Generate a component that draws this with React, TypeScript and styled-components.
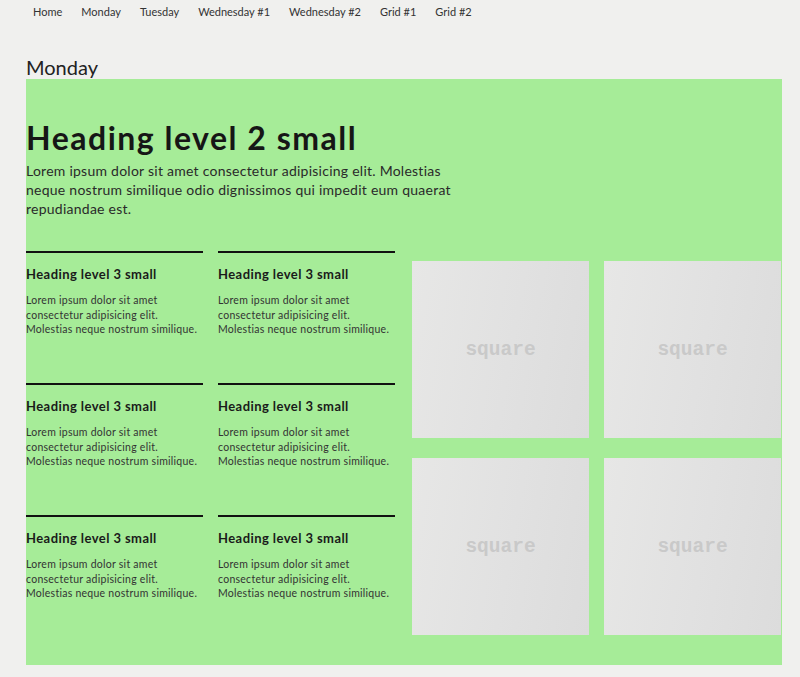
import React from "react";
import styled, { createGlobalStyle } from "styled-components";

const Global = createGlobalStyle`
  html, body { margin: 0; padding: 0; background: #f0f0ee; }
  body { font-family: "Lato", "Noto Sans", sans-serif; color: #222; }
  * { box-sizing: border-box; }
`;

const Page = styled.div`
  padding: 0 18px 0 26px;
`;

const Nav = styled.nav`
  display: flex;
  gap: 19px;
  padding: 5px 0 0 7px;
  height: 55px;
`;

const NavLink = styled.a`
  font-size: 11px;
  color: #333;
  text-decoration: none;
  line-height: 14px;
`;

const PageTitle = styled.h1`
  margin: 0;
  font-size: 20px;
  font-weight: 400;
  line-height: 24px;
  color: #222;
`;

const Section = styled.section`
  background: #a6ec98;
  width: 756px;
  padding: 40px 0 30px;
`;

const H2 = styled.h2`
  margin: 0;
  font-size: 32px;
  font-weight: 700;
  line-height: 38px;
  letter-spacing: 1.5px;
  color: #161616;
`;

const Lead = styled.p`
  margin: 4px 0 0;
  font-size: 14px;
  line-height: 19px;
  letter-spacing: 0.25px;
  color: #2a2a2a;
  max-width: 445px;
`;

const Body = styled.div`
  display: flex;
  align-items: flex-start;
  gap: 17px;
  margin-top: 33px;
`;

const Cards = styled.div`
  display: grid;
  grid-template-columns: 177px 177px;
  column-gap: 15px;
  row-gap: 32px;
`;

const Card = styled.article`
  border-top: 2px solid #111;
  height: 100px;
  padding-top: 13px;
`;

const H3 = styled.h3`
  margin: 0;
  font-size: 13px;
  font-weight: 700;
  line-height: 17px;
  letter-spacing: 0.43px;
  color: #1a1a1a;
`;

const CardText = styled.p`
  margin: 10px 0 0;
  font-size: 10.5px;
  line-height: 14.5px;
  letter-spacing: 0.26px;
  color: #333;
`;

const Squares = styled.div`
  display: grid;
  grid-template-columns: 177px 177px;
  column-gap: 15px;
  row-gap: 20px;
  margin-top: 10px;
`;

const Square = styled.div`
  width: 177px;
  height: 177px;
  background: linear-gradient(100deg, #e7e7e6 0%, #e1e1e1 55%, #dcdcdc 100%);
  display: flex;
  align-items: center;
  justify-content: center;
  font-family: "Courier New", "Liberation Mono", monospace;
  font-weight: 700;
  font-size: 19.5px;
  color: #c9c9c9;
`;

const navItems = ["Home", "Monday", "Tuesday", "Wednesday #1", "Wednesday #2", "Grid #1", "Grid #2"];

export default function App() {
  return (
    <>
      <Global />
      <Page>
        <Nav>
          {navItems.map((n) => (
            <NavLink key={n} href="#">{n}</NavLink>
          ))}
        </Nav>
        <PageTitle>Monday</PageTitle>
        <Section>
          <H2>Heading level 2 small</H2>
          <Lead>
            Lorem ipsum dolor sit amet consectetur adipisicing elit. Molestias neque nostrum similique odio
            dignissimos qui impedit eum quaerat repudiandae est.
          </Lead>
          <Body>
            <Cards>
              {Array.from({ length: 6 }).map((_, i) => (
                <Card key={i}>
                  <H3>Heading level 3 small</H3>
                  <CardText>
                    Lorem ipsum dolor sit amet
                    <br />
                    consectetur adipisicing elit.
                    <br />
                    Molestias neque nostrum similique.
                  </CardText>
                </Card>
              ))}
            </Cards>
            <Squares>
              {Array.from({ length: 4 }).map((_, i) => (
                <Square key={i}>square</Square>
              ))}
            </Squares>
          </Body>
        </Section>
      </Page>
    </>
  );
}
